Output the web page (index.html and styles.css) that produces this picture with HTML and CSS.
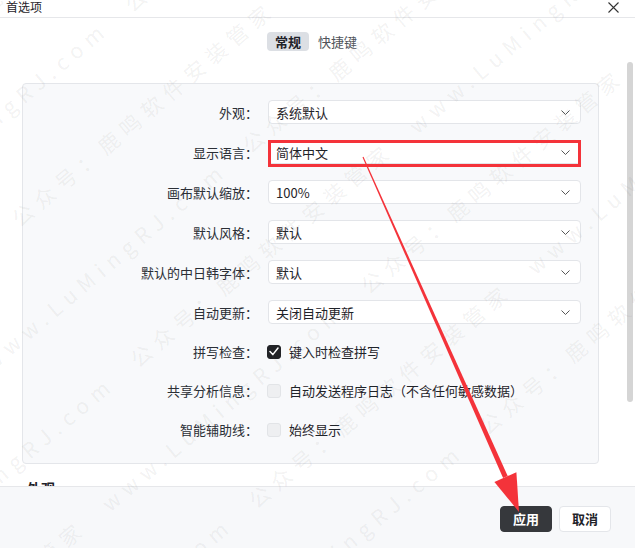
FILE: index.html
```html
<!DOCTYPE html>
<html lang="zh-CN">
<head>
<meta charset="utf-8">
<title>首选项</title>
<link rel="stylesheet" href="styles.css">
</head>
<body>
<div class="window">
  <header class="titlebar">
    <span class="title">首选项</span>
    <span class="close" aria-label="关闭">
      <svg width="11" height="11" viewBox="0 0 11 11"><path d="M0.5 0.5 L10.5 10.5 M10.5 0.5 L0.5 10.5" stroke="#333" stroke-width="1.1" fill="none"/></svg>
    </span>
  </header>

  <div class="body">
    <div class="scroll">
      <nav class="tabs">
        <span class="tab active">常规</span>
        <span class="tab">快捷键</span>
      </nav>

      <section class="panel">
        <div class="row">
          <span class="label">外观：</span>
          <div class="select"><span>系统默认</span><svg class="chev" width="9" height="5" viewBox="0 0 9 5"><path d="M0.5 0.5 L4.5 4.5 L8.5 0.5" stroke="#555" stroke-width="1" fill="none"/></svg></div>
        </div>
        <div class="row">
          <span class="label">显示语言：</span>
          <div class="select"><span>简体中文</span><svg class="chev" width="9" height="5" viewBox="0 0 9 5"><path d="M0.5 0.5 L4.5 4.5 L8.5 0.5" stroke="#555" stroke-width="1" fill="none"/></svg></div>
        </div>
        <div class="row">
          <span class="label">画布默认缩放：</span>
          <div class="select"><span>100%</span><svg class="chev" width="9" height="5" viewBox="0 0 9 5"><path d="M0.5 0.5 L4.5 4.5 L8.5 0.5" stroke="#555" stroke-width="1" fill="none"/></svg></div>
        </div>
        <div class="row">
          <span class="label">默认风格：</span>
          <div class="select"><span>默认</span><svg class="chev" width="9" height="5" viewBox="0 0 9 5"><path d="M0.5 0.5 L4.5 4.5 L8.5 0.5" stroke="#555" stroke-width="1" fill="none"/></svg></div>
        </div>
        <div class="row">
          <span class="label">默认的中日韩字体：</span>
          <div class="select"><span>默认</span><svg class="chev" width="9" height="5" viewBox="0 0 9 5"><path d="M0.5 0.5 L4.5 4.5 L8.5 0.5" stroke="#555" stroke-width="1" fill="none"/></svg></div>
        </div>
        <div class="row">
          <span class="label">自动更新：</span>
          <div class="select"><span>关闭自动更新</span><svg class="chev" width="9" height="5" viewBox="0 0 9 5"><path d="M0.5 0.5 L4.5 4.5 L8.5 0.5" stroke="#555" stroke-width="1" fill="none"/></svg></div>
        </div>
        <div class="row check-row">
          <span class="label">拼写检查：</span>
          <label class="check"><span class="box checked"><svg width="10" height="9" viewBox="0 0 10 9"><path d="M1 4.6 L3.8 7.6 L9 1" stroke="#fff" stroke-width="1.5" fill="none" stroke-linecap="round" stroke-linejoin="round"/></svg></span><span>键入时检查拼写</span></label>
        </div>
        <div class="row check-row">
          <span class="label">共享分析信息：</span>
          <label class="check"><span class="box"></span><span>自动发送程序日志（不含任何敏感数据）</span></label>
        </div>
        <div class="row check-row">
          <span class="label">智能辅助线：</span>
          <label class="check"><span class="box"></span><span>始终显示</span></label>
        </div>
      </section>

      <h3 class="section-title">外观</h3>
    </div>
    <div class="scrollbar"><div class="thumb"></div></div>
  </div>

  <footer class="footer">
    <button class="btn primary">应用</button>
    <button class="btn">取消</button>
  </footer>

  <div class="watermark" aria-hidden="true">
    <div class="wm-inner">
      <p>www.LuMingRJ.com　公众号：鹿鸣软件安装管家　www.LuMingRJ.com　公众号：鹿鸣软件安装管家</p>
      <p>公众号：鹿鸣软件安装管家　www.LuMingRJ.com　公众号：鹿鸣软件安装管家　www.LuMingRJ.com</p>
      <p>www.LuMingRJ.com　公众号：鹿鸣软件安装管家　www.LuMingRJ.com　公众号：鹿鸣软件安装管家</p>
      <p>公众号：鹿鸣软件安装管家　www.LuMingRJ.com　公众号：鹿鸣软件安装管家　www.LuMingRJ.com</p>
      <p>www.LuMingRJ.com　公众号：鹿鸣软件安装管家　www.LuMingRJ.com　公众号：鹿鸣软件安装管家</p>
      <p>公众号：鹿鸣软件安装管家　www.LuMingRJ.com　公众号：鹿鸣软件安装管家　www.LuMingRJ.com</p>
      <p>www.LuMingRJ.com　公众号：鹿鸣软件安装管家　www.LuMingRJ.com　公众号：鹿鸣软件安装管家</p>
      <p>公众号：鹿鸣软件安装管家　www.LuMingRJ.com　公众号：鹿鸣软件安装管家　www.LuMingRJ.com</p>
    </div>
  </div>

  <svg class="annotation" width="635" height="548" viewBox="0 0 635 548" aria-hidden="true">
    <rect x="269.5" y="141.5" width="310" height="24" fill="none" stroke="#f4333a" stroke-width="3"/>
    <polygon points="363.5,156.8 362.5,157.2 503.1,478.1 507.7,476.1" fill="#f4333a"/>
    <polygon points="519,512 516.4,472.2 494.4,482.0" fill="#f4333a"/>
  </svg>
</div>
</body>
</html>
```

FILE: styles.css
```css
* { box-sizing: border-box; }

html, body {
  margin: 0;
  padding: 0;
  background: #ffffff;
}

body {
  font-family: "Noto Sans CJK SC", "Noto Sans", sans-serif;
  color: #1f2329;
  font-size: 13px;
}

.window {
  position: relative;
  width: 635px;
  height: 548px;
  overflow: hidden;
  display: flex;
  flex-direction: column;
  background: #ffffff;
}

.titlebar {
  height: 18px;
  flex: none;
  display: flex;
  align-items: center;
  justify-content: space-between;
  border-bottom: 1px solid #e6e7ea;
  padding: 0 16px 0 6px;
}

.title {
  font-size: 12px;
  line-height: 14px;
  margin-top: -3px;
  color: #1f2329;
}

.close {
  display: flex;
  margin-top: -2px;
}

.body {
  flex: 1;
  display: flex;
  min-height: 0;
}

.scroll {
  flex: 1;
  overflow: hidden;
  padding-top: 14px;
}

.tabs {
  display: flex;
  justify-content: center;
  gap: 1px;
  padding-left: 10px;
}

.tab {
  height: 19px;
  line-height: 19px;
  padding: 0 8px;
  border-radius: 4px;
  font-size: 13px;
  color: #50545b;
}

.tab.active {
  background: #dcdfe4;
  color: #1f2329;
  font-weight: bold;
}

.panel {
  margin: 32px 23px 0 22px;
  border: 1px solid #e4e6ea;
  border-radius: 4px;
  background: #f8f9fb;
  padding: 16px 17px 22px 0;
  display: flex;
  flex-direction: column;
  gap: 16px;
}

.row {
  display: grid;
  grid-template-columns: 235px 1fr;
  column-gap: 10px;
  align-items: center;
  height: 24px;
}

.row.check-row {
  height: 23px;
}

.label {
  text-align: right;
  color: #2b2f36;
  font-size: 13px;
  white-space: nowrap;
}

.select {
  height: 24px;
  background: #ffffff;
  border: 1px solid #e3e5e9;
  border-radius: 4px;
  padding: 0 10px 0 7px;
  display: flex;
  align-items: center;
  justify-content: space-between;
  font-size: 13px;
  color: #1f2329;
}

.chev {
  flex: none;
  margin-top: 1px;
}

.check {
  display: flex;
  align-items: center;
  gap: 8px;
  margin-left: -1px;
  font-size: 13px;
  color: #1f2329;
}

.box {
  width: 14px;
  height: 14px;
  border-radius: 3px;
  background: #eeeff1;
  border: 1px solid #e2e4e7;
  display: flex;
  align-items: center;
  justify-content: center;
  flex: none;
}

.box.checked {
  background: #222327;
  border-color: #222327;
}

.section-title {
  margin: 14px 0 0 27px;
  font-size: 14px;
  font-weight: bold;
  color: #1f2329;
}

.scrollbar {
  width: 13px;
  flex: none;
  padding: 44px 2px 0 5px;
}

.thumb {
  width: 6px;
  height: 340px;
  border-radius: 3px;
  background: #d5d5d5;
}

.footer {
  height: 62px;
  flex: none;
  border-top: 1px solid #e6e7ea;
  background: #f7f8fa;
  display: flex;
  justify-content: flex-end;
  align-items: flex-start;
  gap: 7px;
  padding: 19px 24px 0 0;
}

.btn {
  height: 26px;
  padding: 0 12px;
  border-radius: 4px;
  border: 1px solid #e4e6ea;
  background: #ffffff;
  color: #1f2329;
  font-family: "Noto Sans CJK SC", "Noto Sans", sans-serif;
  font-size: 13px;
  font-weight: bold;
  line-height: 24px;
}

.btn.primary {
  background: #36383c;
  border-color: #36383c;
  color: #ffffff;
}

.watermark {
  position: absolute;
  inset: 0;
  overflow: hidden;
  pointer-events: none;
}

.wm-inner {
  position: absolute;
  left: -300px;
  top: -250px;
  width: 1400px;
  transform: rotate(-40deg);
  transform-origin: 50% 50%;
}

.wm-inner p {
  margin: 0 0 62px 0;
  font-size: 21px;
  letter-spacing: 7px;
  white-space: nowrap;
  color: rgba(90, 90, 90, 0.085);
}

.wm-inner p:nth-child(even) {
  margin-left: -140px;
}

.annotation {
  position: absolute;
  left: 0;
  top: 0;
  pointer-events: none;
}
```
